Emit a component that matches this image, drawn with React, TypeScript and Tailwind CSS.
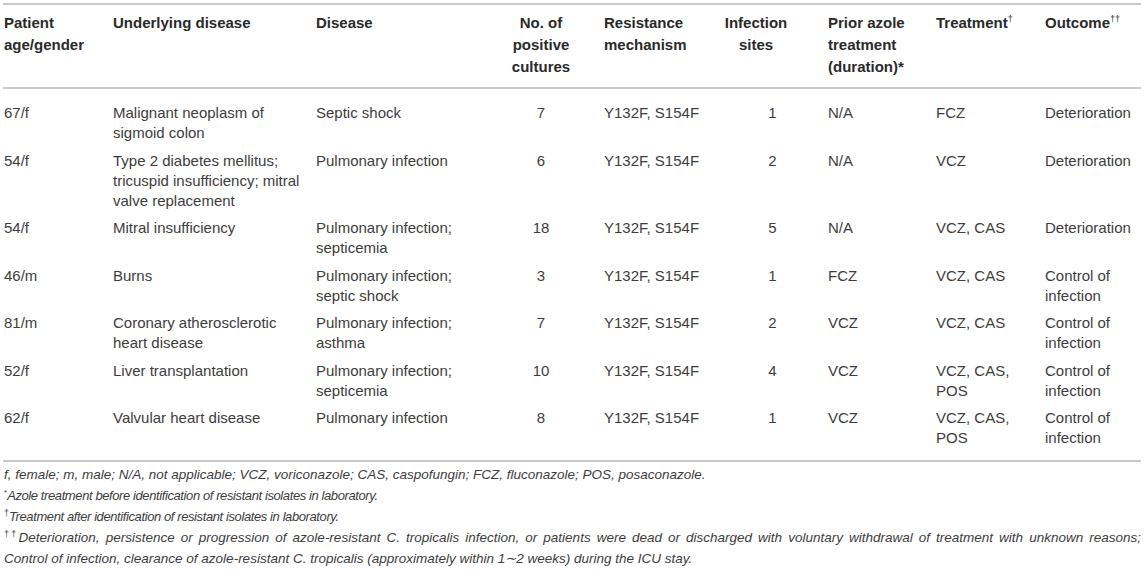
import React from "react";

const rows: { age: string; und: string; dis: string; n: string; res: string; sites: string; prior: string; tr: string; out: string }[] = [
  { age: "67/f", und: "Malignant neoplasm of sigmoid colon", dis: "Septic shock", n: "7", res: "Y132F, S154F", sites: "1", prior: "N/A", tr: "FCZ", out: "Deterioration" },
  { age: "54/f", und: "Type 2 diabetes mellitus; tricuspid insufficiency; mitral valve replacement", dis: "Pulmonary infection", n: "6", res: "Y132F, S154F", sites: "2", prior: "N/A", tr: "VCZ", out: "Deterioration" },
  { age: "54/f", und: "Mitral insufficiency", dis: "Pulmonary infection; septicemia", n: "18", res: "Y132F, S154F", sites: "5", prior: "N/A", tr: "VCZ, CAS", out: "Deterioration" },
  { age: "46/m", und: "Burns", dis: "Pulmonary infection; septic shock", n: "3", res: "Y132F, S154F", sites: "1", prior: "FCZ", tr: "VCZ, CAS", out: "Control of infection" },
  { age: "81/m", und: "Coronary atherosclerotic heart disease", dis: "Pulmonary infection; asthma", n: "7", res: "Y132F, S154F", sites: "2", prior: "VCZ", tr: "VCZ, CAS", out: "Control of infection" },
  { age: "52/f", und: "Liver transplantation", dis: "Pulmonary infection; septicemia", n: "10", res: "Y132F, S154F", sites: "4", prior: "VCZ", tr: "VCZ, CAS, POS", out: "Control of infection" },
  { age: "62/f", und: "Valvular heart disease", dis: "Pulmonary infection", n: "8", res: "Y132F, S154F", sites: "1", prior: "VCZ", tr: "VCZ, CAS, POS", out: "Control of infection" },
];

export default function App() {
  const th = "align-top text-left font-bold pl-[1px] pr-[6px] pt-[7px] pb-[9px] border-t-2 border-b-2 border-[#c9c9c9]";
  const fsup = "relative top-[-5px] align-baseline not-italic leading-none tracking-normal";
  return (
    <div
      className="w-[1145px] h-[570px] bg-white overflow-hidden text-[#3d3d3d]"
      style={{ fontFamily: '"Liberation Sans", Arial, Helvetica, sans-serif' }}
    >
      <table className="ml-[3px] mt-[3px] w-[1138px] table-fixed border-separate border-spacing-0">
        <colgroup>
          <col className="w-[109px]" />
          <col className="w-[203px]" />
          <col className="w-[169px]" />
          <col className="w-[119px]" />
          <col className="w-[120px]" />
          <col className="w-[104px]" />
          <col className="w-[108px]" />
          <col className="w-[109px]" />
          <col className="w-[97px]" />
        </colgroup>
        <thead className="text-[15px] leading-[22px] text-[#2a2a2a]">
          <tr>
            <th className={th}>Patient<br />age/gender</th>
            <th className={th}>Underlying disease</th>
            <th className={th}>Disease</th>
            <th className={th + " !text-center"}>No. of<br />positive<br />cultures</th>
            <th className={th}>Resistance<br />mechanism</th>
            <th className={th + " !text-center !pr-[39px]"}>Infection<br />sites</th>
            <th className={th}>Prior azole<br />treatment<br />(duration)*</th>
            <th className={th}>
              Treatment<span className="relative top-[-6px] text-[9px] font-normal leading-none">†</span>
            </th>
            <th className={th}>
              Outcome<span className="relative top-[-6px] text-[9px] font-normal leading-none">††</span>
            </th>
          </tr>
        </thead>
        <tbody className="text-[15px] leading-[20px]">
          {rows.map((r, i) => {
            const first = i === 0;
            const last = i === rows.length - 1;
            const pad =
              (first ? "pt-[14px] " : "pt-[4px] ") +
              (last ? "pb-[12px] border-b-2 border-[#c9c9c9] " : "pb-[3.5px] ");
            const td = "align-top text-left pl-[1px] pr-[6px] " + pad;
            const tdc = "align-top text-center pl-[1px] pr-[6px] " + pad;
            return (
              <tr key={i}>
                <td className={td}>{r.age}</td>
                <td className={td}>{r.und}</td>
                <td className={td}>{r.dis}</td>
                <td className={tdc}>{r.n}</td>
                <td className={td}>{r.res}</td>
                <td className={tdc}>{r.sites}</td>
                <td className={td}>{r.prior}</td>
                <td className={td}>{r.tr}</td>
                <td className={td}>{r.out}</td>
              </tr>
            );
          })}
        </tbody>
      </table>
      <div className="ml-[3px] pl-[1px] pt-[1.5px] w-[1138px] text-[13.5px] leading-[21px] italic">
        <div className="whitespace-nowrap">
          f, female; m, male; N/A, not applicable; VCZ, voriconazole; CAS, caspofungin; FCZ, fluconazole; POS, posaconazole.
        </div>
        <div className="whitespace-nowrap text-[13px] tracking-[-0.4px]">
          <span className={fsup + " text-[8px]"}>*</span>Azole treatment before identification of resistant isolates in laboratory.
        </div>
        <div className="whitespace-nowrap text-[13px] tracking-[-0.4px]">
          <span className={fsup + " text-[9px]"}>†</span>Treatment after identification of resistant isolates in laboratory.
        </div>
        <div className="text-justify [text-align-last:justify]">
          <span className={fsup + " text-[9px]"}>††</span>Deterioration, persistence or progression of azole-resistant C. tropicalis infection, or patients were dead or discharged with voluntary withdrawal of treatment with unknown reasons;
        </div>
        <div className="whitespace-nowrap">
          Control of infection, clearance of azole-resistant C. tropicalis (approximately within 1∼2 weeks) during the ICU stay.
        </div>
      </div>
    </div>
  );
}
